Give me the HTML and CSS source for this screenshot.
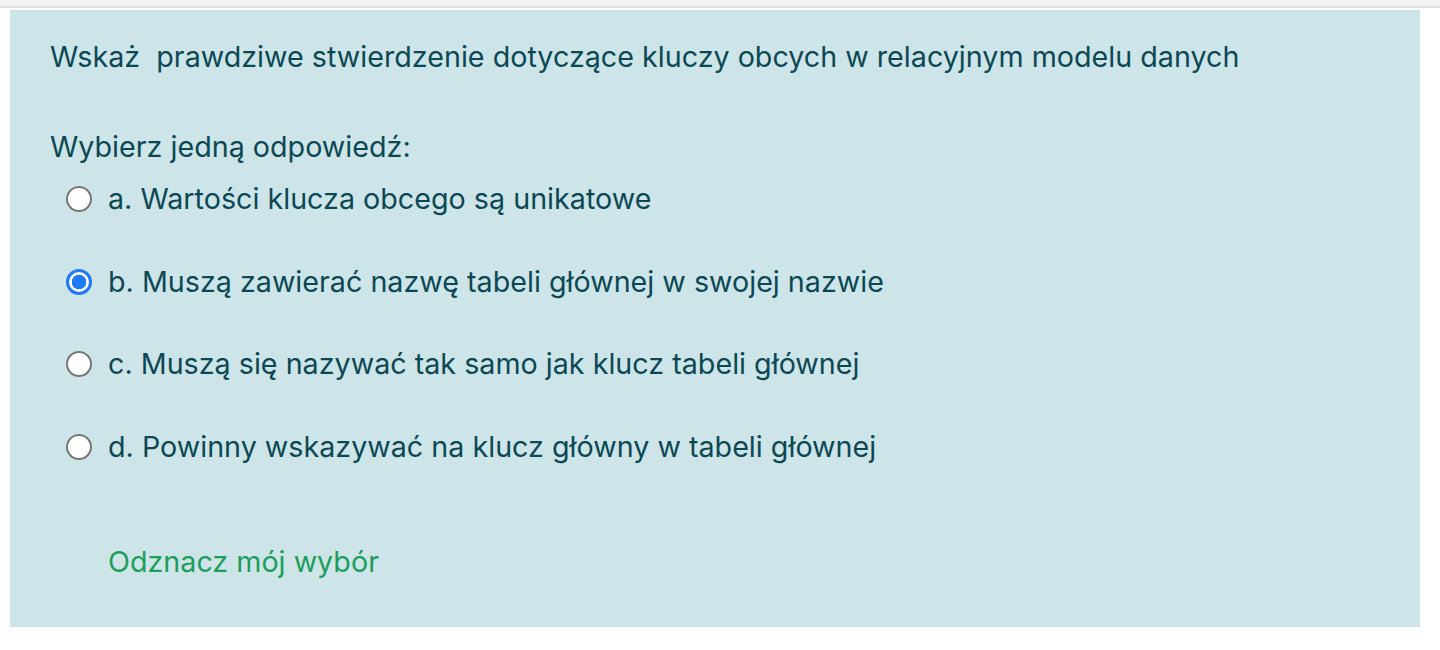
FILE: index.html
```html
<!DOCTYPE html>
<html lang="pl">
<head>
<meta charset="utf-8">
<title>Pytanie</title>
<link rel="stylesheet" href="styles.css">
</head>
<body>
<div class="topbar"></div>
<div class="formulation">
  <div class="qtext">Wskaż&nbsp; prawdziwe stwierdzenie dotyczące kluczy obcych w relacyjnym modelu danych</div>
  <div class="ablock">
    <div class="prompt">Wybierz jedną odpowiedź:</div>
    <div class="answer">
      <label class="opt"><input type="radio" name="q1" class="radio"><span class="label">a. Wartości klucza obcego są unikatowe</span></label>
      <label class="opt"><input type="radio" name="q1" class="radio" checked><span class="label">b. Muszą zawierać nazwę tabeli głównej w swojej nazwie</span></label>
      <label class="opt"><input type="radio" name="q1" class="radio"><span class="label">c. Muszą się nazywać tak samo jak klucz tabeli głównej</span></label>
      <label class="opt"><input type="radio" name="q1" class="radio"><span class="label">d. Powinny wskazywać na klucz główny w tabeli głównej</span></label>
    </div>
    <div class="clear"><a href="#" class="clearlink">Odznacz mój wybór</a></div>
  </div>
</div>
</body>
</html>
```

FILE: styles.css
```css
html, body {
  margin: 0;
  padding: 0;
  background: #ffffff;
}
body {
  font-family: Inter, "Noto Sans", "Liberation Sans", sans-serif;
  font-size: 28.7px;
  line-height: 42px;
  color: #0b4854;
}
.topbar {
  height: 6px;
  background: #f4f4f4;
  border-bottom: 2px solid #dedede;
  margin-bottom: 2px;
}
.formulation {
  margin: 0 20px 0 10px;
  background: #cde5e8;
  padding: 26px 40px 44px 40px;
}
.qtext {
  margin-bottom: 48px;
}
.prompt {
  margin-bottom: 10px;
}
.answer {
  display: flex;
  flex-direction: column;
  gap: 40.5px;
  padding-left: 16px;
}
.opt {
  display: flex;
  align-items: center;
  gap: 16px;
}
.radio {
  appearance: none;
  -webkit-appearance: none;
  margin: 0;
  width: 26px;
  height: 26px;
  border-radius: 50%;
  border: 2px solid #767676;
  background: #ffffff;
  box-sizing: border-box;
  flex: none;
}
.radio:checked {
  border: 3px solid #1f7af5;
  background: radial-gradient(circle, #1f7af5 0 7px, #ffffff 7.5px);
}
.clear {
  margin-top: 73px;
  padding-left: 58px;
}
.clearlink {
  color: #1c9e5b;
  text-decoration: none;
}
```
